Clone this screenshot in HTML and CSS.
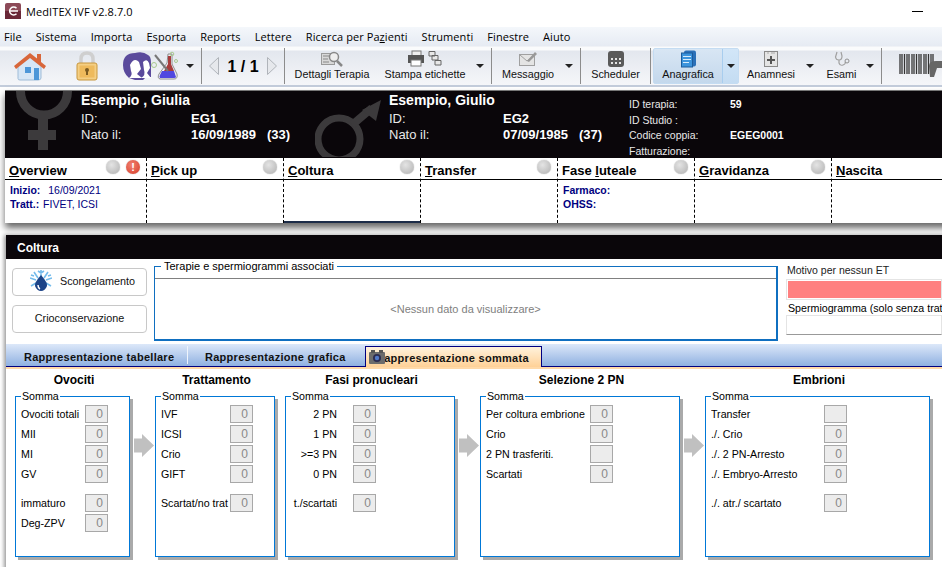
FILE: index.html
```html
<!DOCTYPE html>
<html lang="it">
<head>
  <meta charset="UTF-8" />
  <title>MedITEX IVF v2.8.7.0</title>
  <link rel="stylesheet" href="styles.css">
</head>
<body>

  <div class="titlebar">
    <svg class="app-icon" width="16" height="16" viewBox="0 0 16 16">
      <rect width="16" height="16" rx="2" fill="#8c4a58"/>
      <rect y="8" width="16" height="8" fill="#6a2838"/>
      <path d="M11.5 5.2A4 4 0 1 0 11.5 10.8M5.500 8H13" fill="none" stroke="#fff" stroke-width="1.500"/>
    </svg>
    <span class="app-title">MedITEX IVF v2.8.7.0</span>
    <span class="minimize"></span>
  </div>

  <div class="menubar">
    <span>File</span>
    <span>Sistema</span>
    <span>Importa</span>
    <span>Esporta</span>
    <span>Reports</span>
    <span>Lettere</span>
    <span>Ricerca per Pa<u>z</u>ienti</span>
    <span>Strumenti</span>
    <span>Finestre</span>
    <span>Aiuto</span>
  </div>

  <div class="toolbar">
    <div class="tool tool-home">
      <svg width="34" height="34" viewBox="0 0 34 34">
        <path d="M5 16V29.500Q5 31 7 31H25Q28 31 28 29V15L17 6Z" fill="#d6e6f6" stroke="#9fbcd8"/>
        <path d="M17 4L1 17L3 20L17 9L31 20L33 17L28 13V5H24V9.500Z" fill="#d8663a"/>
        <rect x="12" y="18" width="6" height="6" fill="#4c96d8"/>
        <rect x="21" y="19" width="5" height="12" fill="#4c96d8"/>
      </svg>
    </div>
    <div class="tool tool-lock">
      <svg width="22" height="30" viewBox="0 0 22 30">
        <path d="M5 13V8Q5 2 11 2T17 8V13" fill="none" stroke="#cfcfcf" stroke-width="3.500"/>
        <rect x="1" y="12" width="20" height="17" rx="2" fill="#f4cf84" stroke="#c8963c"/>
        <rect x="3.500" y="14.500" width="15" height="12" fill="#eeba5c"/>
        <circle cx="11" cy="19" r="2" fill="#7a5a20"/>
        <rect x="10" y="19" width="2" height="5" fill="#7a5a20"/>
      </svg>
    </div>
    <div class="tool tool-couple">
      <svg width="56" height="30" viewBox="0 0 56 30">
        <path d="M1 14Q1 2 13 2Q21 0 26 4Q29 5 29 12L29 26H24L21 29H13L7 27Q1 22 1 14Z" fill="#5a4a9c"/>
        <path d="M8 14Q12 6 17 11L19 18L15 23L20 27H7Q11 24 9 20Z" fill="#fff"/>
        <path d="M21 11Q25 7 27 12L28 17L25 22L29 27H19Q24 24 22 19Z" fill="#fff"/>
        <path d="M46 3H50L50 13L55 23Q56 28 52 28H38Q35 27 37 23L45 12Z" fill="#f0f0f4" stroke="#777" stroke-width="0.800"/>
        <path d="M40 20H52L54 26Q54 27 52 27H38Q37 26 38 24Z" fill="#5048e0"/>
        <path d="M46 5H49V13L52 20H42L46 13Z" fill="#a83c3c"/>
        <path d="M33 4L46 20" stroke="#777" stroke-width="2"/>
        <circle cx="32" cy="14" r="2.500" fill="none" stroke="#a8c890"/>
        <circle cx="50" cy="3" r="1.800" fill="none" stroke="#a8c890"/>
        <circle cx="54" cy="10" r="1.500" fill="none" stroke="#a8c890"/>
      </svg>
    </div>
    <span class="caret caret-couple"></span>
    <span class="tool-sep"></span>
    <div class="pager">
      <svg width="10" height="18" viewBox="0 0 10 18"><path d="M9.500 0.500V17.500L0.500 9Z" fill="#e6e8ec" stroke="#b0b4ba"/></svg>
      <span class="page-text">1 / 1</span>
      <svg width="10" height="18" viewBox="0 0 10 18"><path d="M0.500 0.500V17.500L9.500 9Z" fill="#e6e8ec" stroke="#b0b4ba"/></svg>
    </div>
    <span class="tool-sep"></span>
    <div class="tool tool-text tool-details">
      <svg width="22" height="18" viewBox="0 0 22 18">
        <rect x="0.500" y="3.500" width="13" height="11" fill="#d8d8d8" stroke="#9a9a9a"/>
        <path d="M2 6H9M2 9H7M2 12H8" stroke="#888"/>
        <circle cx="13" cy="7" r="4.500" fill="#eee" stroke="#888" stroke-width="1.500"/>
        <path d="M16 11L21 16" stroke="#888" stroke-width="2.500"/>
      </svg>
      <span>Dettagli Terapia</span>
    </div>
    <div class="tool tool-text tool-print">
      <svg width="34" height="18" viewBox="0 0 34 18">
        <rect x="4" y="1" width="9" height="5" fill="#eee" stroke="#777"/>
        <rect x="0" y="5" width="16" height="8" fill="#555"/>
        <rect x="3" y="10" width="10" height="6" fill="#fff" stroke="#777"/>
        <path d="M21 1.500H27V6H21ZM24 5.500H30V10H24ZM27 10.500H33V15H27Z" fill="#e8e8e8" stroke="#666"/>
      </svg>
      <span>Stampa etichette</span>
    </div>
    <span class="caret caret-print"></span>
    <span class="tool-sep"></span>
    <div class="tool tool-text tool-message">
      <svg width="18" height="16" viewBox="0 0 18 16">
        <rect x="0.500" y="3.500" width="15" height="11" fill="#e4e4e4" stroke="#a0a0a0"/>
        <path d="M1 4L8 10L15 4" fill="none" stroke="#a0a0a0"/>
        <path d="M8 10L16 1L18 3L10 11Z" fill="#999"/>
      </svg>
      <span>Messaggio</span>
    </div>
    <span class="caret caret-message"></span>
    <span class="tool-sep"></span>
    <div class="tool tool-text tool-scheduler">
      <svg width="16" height="16" viewBox="0 0 16 16">
        <rect width="16" height="16" rx="3" fill="#5a5a5a"/>
        <path d="M3 7H5V9H3ZM7 7H9V9H7ZM11 7H13V9H11ZM3 11H5V13H3ZM7 11H9V13H7ZM11 11H13V13H11Z" fill="#e4e4e4"/>
      </svg>
      <span>Scheduler</span>
    </div>
    <span class="tool-sep"></span>
    <div class="tool-split">
      <div class="tool tool-text tool-anagrafica">
        <svg width="15" height="17" viewBox="0 0 15 17">
          <rect x="3" y="0" width="12" height="16" rx="2" fill="#2a70b8"/>
          <rect x="0.500" y="2.500" width="11" height="14" fill="#3c94dc" stroke="#1c5c9c"/>
          <path d="M2 6H10M2 9H10M2 12H8" stroke="#d8ecfa"/>
        </svg>
        <span>Anagrafica</span>
      </div>
      <div class="split-drop"><span class="caret"></span></div>
    </div>
    <div class="tool tool-text tool-anamnesi">
      <svg width="14" height="16" viewBox="0 0 14 16">
        <rect x="0.500" y="0.500" width="13" height="15" fill="#e4e4e4" stroke="#8a8a8a"/>
        <path d="M3 2H5M7 2H11" stroke="#aaa"/>
        <path d="M6 5H8V8H11V10H8V13H6V10H3V8H6Z" fill="#555"/>
      </svg>
      <span>Anamnesi</span>
    </div>
    <span class="caret caret-anamnesi"></span>
    <div class="tool tool-text tool-esami">
      <svg width="16" height="16" viewBox="0 0 16 16">
        <path d="M3 1L1.500 6Q2 9 5 9T8 5L7 1M5 9V12Q6 15 9 14T11 11" fill="none" stroke="#a0a0a0" stroke-width="1.200"/>
        <circle cx="13" cy="10" r="2" fill="none" stroke="#909090"/>
      </svg>
      <span>Esami</span>
    </div>
    <span class="caret caret-esami"></span>
    <span class="tool-sep"></span>
    <svg class="barcode" width="44" height="24" viewBox="0 0 44 24">
      <path d="M1 1V21M3 1V21M5.500 1V21M8 1V21M10 1V21M13 1V21M15 1V21M17.500 1V21M20 1V21M22 1V21M25 1V21M27 1V21M29.500 1V21M32 1V21M34 1V21" stroke="#333" stroke-width="1.300"/>
      <path d="M30 13Q30 8 37 8H44V15H38L35 24H31Z" fill="#666"/>
    </svg>
  </div>

  <div class="patient-card">
    <div class="patient-head">
      <div class="person">
        <svg class="gender gender-f" width="56" height="60" viewBox="0 0 56 60">
          <circle cx="28" cy="0.500" r="23.500" fill="none" stroke="#3c3a3c" stroke-width="9"/>
          <path d="M27 24V59M12 44H40" stroke="#3c3a3c" stroke-width="10"/>
        </svg>
        <div class="person-name">Esempio , Giulia</div>
        <div class="person-row"><span class="person-label">ID:</span><b>EG1</b></div>
        <div class="person-row"><span class="person-label">Nato il:</span><b>16/09/1989&nbsp;&nbsp; (33)</b></div>
      </div>
      <div class="person person-male">
        <svg class="gender gender-m" width="68" height="58" viewBox="0 0 68 58">
          <circle cx="24" cy="40" r="21" fill="none" stroke="#3c3a3c" stroke-width="7"/>
          <path d="M37 26L57 9" stroke="#3c3a3c" stroke-width="8"/>
          <path d="M47 11L66 1L61 22Z" fill="#3c3a3c"/>
        </svg>
        <div class="person-name">Esempio, Giulio</div>
        <div class="person-row"><span class="person-label">ID:</span><b>EG2</b></div>
        <div class="person-row"><span class="person-label">Nato il:</span><b>07/09/1985&nbsp;&nbsp; (37)</b></div>
      </div>
      <div class="therapy">
        <div class="therapy-row"><span class="therapy-label">ID terapia:</span><b>59</b></div>
        <div class="therapy-row"><span class="therapy-label">ID Studio :</span></div>
        <div class="therapy-row"><span class="therapy-label">Codice coppia:</span><b>EGEG0001</b></div>
        <div class="therapy-row"><span class="therapy-label">Fatturazione:</span></div>
      </div>
    </div>
    <div class="stages">
      <div class="stage stage-first">
        <div class="stage-title"><span><u>O</u>verview</span><span class="leds"><i class="led"></i><i class="led led-warn">!</i></span></div>
        <div class="stage-body">
          <div class="stage-line"><b>Inizio:</b> <span class="date">16/09/2021</span></div>
          <div class="stage-line"><b>Tratt.:</b> FIVET, ICSI</div>
        </div>
      </div>
      <div class="stage">
        <div class="stage-title"><span><u>P</u>ick up</span><i class="led"></i></div>
        <div class="stage-body"></div>
      </div>
      <div class="stage stage-active">
        <div class="stage-title"><span><u>C</u>oltura</span><i class="led"></i></div>
        <div class="stage-body"></div>
      </div>
      <div class="stage">
        <div class="stage-title"><span><u>T</u>ransfer</span><i class="led"></i></div>
        <div class="stage-body"></div>
      </div>
      <div class="stage">
        <div class="stage-title"><span>Fase <u>l</u>uteale</span><i class="led"></i></div>
        <div class="stage-body">
          <div class="stage-line"><b>Farmaco:</b></div>
          <div class="stage-line"><b>OHSS:</b></div>
        </div>
      </div>
      <div class="stage">
        <div class="stage-title"><span><u>G</u>ravidanza</span><i class="led"></i></div>
        <div class="stage-body"></div>
      </div>
      <div class="stage">
        <div class="stage-title"><span><u>N</u>ascita</span><i class="led"></i></div>
        <div class="stage-body"></div>
      </div>
    </div>
  </div>

  <div class="section">
    <div class="section-head">Coltura</div>

    <div class="section-top">
      <div class="actions">
        <button class="action action-icon">
          <svg width="22" height="22" viewBox="0 0 22 22">
            <path d="M11 0V8M4 2L8 8M18 2L14 8M0 8L6 10M22 8L16 10M1 16L6 13M21 16L16 13M8 1L11 3L14 1M1 5L4 6M21 5L18 6" fill="none" stroke="#74bcec" stroke-width="1.600"/>
            <path d="M11 5Q18 13 17 16Q15 21 11 21T5 16Q4 13 11 5Z" fill="#1c4488"/>
            <path d="M8 15Q8 18 10 19" fill="none" stroke="#fff" stroke-width="1.500"/>
          </svg>
          <span>Scongelamento</span>
        </button>
        <button class="action">Crioconservazione</button>
      </div>

      <div class="linked">
        <span class="linked-title">Terapie e spermiogrammi associati</span>
        <div class="linked-grid">&lt;Nessun dato da visualizzare&gt;</div>
      </div>

      <div class="side-fields">
        <div class="side-label">Motivo per nessun ET</div>
        <div class="side-input side-input-alert"><span></span></div>
        <div class="side-label side-label-sperm">Spermiogramma (solo senza trat</div>
        <div class="side-input side-input-plain"></div>
      </div>
    </div>

    <div class="viewtabs">
      <span class="viewtab viewtab-table">Rappresentazione tabellare</span>
      <span class="viewtab viewtab-graph">Rappresentazione grafica</span>
      <span class="viewtab viewtab-active">
        <svg class="camera" width="16" height="14" viewBox="0 0 16 14">
          <rect y="2" width="16" height="12" rx="1" fill="#6c6c6c"/>
          <rect x="2" y="0" width="4" height="3" fill="#555"/>
          <rect x="10" y="0" width="4" height="3" fill="#555"/>
          <circle cx="8" cy="8" r="4" fill="#2c2c50"/>
          <circle cx="8" cy="8" r="2.200" fill="#5078c8"/>
        </svg>
        Rappresentazione sommata
      </span>
    </div>

    <div class="groups">
      <div class="group-col col-ovociti">
        <div class="group-title">Ovociti</div>
        <div class="group">
          <span class="group-legend">Somma</span>
          <div class="row"><span class="lbl">Ovociti totali</span><span class="val">0</span></div>
          <div class="row"><span class="lbl">MII</span><span class="val">0</span></div>
          <div class="row"><span class="lbl">MI</span><span class="val">0</span></div>
          <div class="row"><span class="lbl">GV</span><span class="val">0</span></div>
          <div class="row row-gap"><span class="lbl">immaturo</span><span class="val">0</span></div>
          <div class="row"><span class="lbl">Deg-ZPV</span><span class="val">0</span></div>
        </div>
      </div>
      <div class="flow-arrow"></div>
      <div class="group-col col-tratt">
        <div class="group-title">Trattamento</div>
        <div class="group">
          <span class="group-legend">Somma</span>
          <div class="row"><span class="lbl">IVF</span><span class="val">0</span></div>
          <div class="row"><span class="lbl">ICSI</span><span class="val">0</span></div>
          <div class="row"><span class="lbl">Crio</span><span class="val">0</span></div>
          <div class="row"><span class="lbl">GIFT</span><span class="val">0</span></div>
          <div class="row row-gap"><span class="lbl">Scartat/no trat</span><span class="val">0</span></div>
        </div>
      </div>
      <div class="group-col col-fasi">
        <div class="group-title">Fasi pronucleari</div>
        <div class="group">
          <span class="group-legend">Somma</span>
          <div class="row"><span class="lbl">2 PN</span><span class="val">0</span></div>
          <div class="row"><span class="lbl">1 PN</span><span class="val">0</span></div>
          <div class="row"><span class="lbl">&gt;=3 PN</span><span class="val">0</span></div>
          <div class="row"><span class="lbl">0 PN</span><span class="val">0</span></div>
          <div class="row row-gap"><span class="lbl">t./scartati</span><span class="val">0</span></div>
        </div>
      </div>
      <div class="flow-arrow"></div>
      <div class="group-col col-selez">
        <div class="group-title">Selezione 2 PN</div>
        <div class="group">
          <span class="group-legend">Somma</span>
          <div class="row"><span class="lbl">Per coltura embrione</span><span class="val">0</span></div>
          <div class="row"><span class="lbl">Crio</span><span class="val">0</span></div>
          <div class="row"><span class="lbl">2 PN trasferiti.</span><span class="val"></span></div>
          <div class="row"><span class="lbl">Scartati</span><span class="val">0</span></div>
        </div>
      </div>
      <div class="flow-arrow"></div>
      <div class="group-col col-embrioni">
        <div class="group-title">Embrioni</div>
        <div class="group">
          <span class="group-legend">Somma</span>
          <div class="row"><span class="lbl">Transfer</span><span class="val"></span></div>
          <div class="row"><span class="lbl">./. Crio</span><span class="val">0</span></div>
          <div class="row"><span class="lbl">./. 2 PN-Arresto</span><span class="val">0</span></div>
          <div class="row"><span class="lbl">./. Embryo-Arresto</span><span class="val">0</span></div>
          <div class="row row-gap"><span class="lbl">./. atr./ scartato</span><span class="val">0</span></div>
        </div>
      </div>
    </div>
  </div>

</body>
</html>
```

FILE: styles.css
```css
* {
  box-sizing: border-box;
}

html, body {
  height: 567px;
  overflow: hidden;
}

body {
  margin: 0;
  width: 942px;
  background: #fff;
  font-family: 'Liberation Sans', Arial, sans-serif;
  font-size: 11px;
  color: #000;
}

/* title bar */
.titlebar {
  height: 27px;
  display: flex;
  align-items: flex-start;
  padding: 3px 0 0 5px;
  background: #fff;
}

.app-title {
  margin-left: 5px;
  font-family: 'Open Sans', sans-serif;
  font-size: 11px;
  letter-spacing: 0.1px;
  line-height: 17px;
}

.minimize {
  width: 11px;
  height: 1px;
  margin: 8px 19px 0 auto;
  background: #000;
}

/* menu */
.menubar {
  height: 19px;
  display: flex;
  gap: 14px;
  padding-left: 4px;
  align-items: center;
  background: linear-gradient(#f4f7fb, #e6ebf3);
  font-family: 'Open Sans', sans-serif;
  font-size: 11px;
  letter-spacing: 0.075px;
}

/* toolbar */
.toolbar {
  height: 41px;
  display: flex;
  align-items: stretch;
  border-top: 1px solid #f0f2f6;
  border-bottom: 2px solid #c3ccdb;
  background: linear-gradient(#fafbfc 0, #fafbfc 3px, #e3e7ee 4px, #f5f6f9 100%);
  overflow: hidden;
}

.tool {
  display: flex;
  flex-direction: column;
  align-items: center;
  justify-content: center;
  flex: none;
}

.tool-text {
  justify-content: flex-start;
  padding-top: 3px;
  white-space: nowrap;
  font-size: 10.800px;
  line-height: 13px;
  color: #111;
}

.tool-text svg {
  height: 18px;
}

.tool-home { width: 60px; }
.tool-lock { width: 54px; }
.tool-couple { width: 66px; padding-left: 6px; }
.tool-details { width: 94px; }
.tool-print { width: 92px; }
.tool-message { width: 72px; }
.tool-scheduler { width: 69px; }
.tool-anagrafica { width: 68px; padding-top: 1px; }
.tool-anamnesi { width: 60px; margin-left: 2px; }
.tool-esami { width: 37px; }

.tool-sep {
  width: 1px;
  flex: none;
  margin: 1px 0;
  background: #8c8c8c;
}

.caret {
  width: 0;
  height: 0;
  flex: none;
  align-self: center;
  border-left: 4px solid transparent;
  border-right: 4px solid transparent;
  border-top: 4px solid #222;
}

.caret-couple { margin: 0 7px 0 6px; }
.caret-print { margin: 0 7px 0 5px; }
.caret-message { margin: 0 7px 0 1px; }
.caret-anamnesi { margin: 0 9px 0 5px; }
.caret-esami { margin: 0 7px 0 6px; }

.pager {
  width: 82px;
  flex: none;
  display: flex;
  align-items: center;
  justify-content: center;
  gap: 8px;
}

.page-text {
  padding-top: 1px;
  font-size: 16px;
  font-weight: bold;
  white-space: nowrap;
}

.tool-split {
  display: flex;
  flex: none;
  margin: 1px 0 1px 2px;
  border: 1px solid #c4dcf2;
  border-radius: 2px;
  background: linear-gradient(#d8e6f4, #c4d8ec);
}

.split-drop {
  width: 16px;
  display: flex;
  justify-content: center;
  border-left: 1px solid #a8cdee;
  background: linear-gradient(#d2e6f8, #c4dcf2);
}

.barcode {
  margin: 6px 0 0 17px;
  flex: none;
}

/* patient card */
.patient-card {
  position: relative;
  margin: 3px 0 0 5px;
  width: 1000px;
  background: #fff;
  border-top: 1px solid #777;
  box-shadow: 0 5px 7px rgba(0, 0, 0, 0.6);
}

.patient-head {
  height: 67px;
  display: flex;
  background: #0a060a;
  color: #fff;
  overflow: hidden;
}

.person {
  position: relative;
  width: 308px;
  flex: none;
  padding: 1px 0 0 76px;
}

.person-name {
  position: relative;
  margin-bottom: 2px;
  font-size: 14px;
  font-weight: bold;
  line-height: 17px;
}

.person-row {
  position: relative;
  display: flex;
  font-size: 13px;
  line-height: 16px;
  color: #e8e8e8;
}

.person-row b {
  color: #fff;
  white-space: nowrap;
}

.person-label {
  width: 110px;
  flex: none;
}

.person-male .person-label {
  width: 114px;
}

.gender {
  position: absolute;
}

.gender-f {
  left: 11px;
  top: 0;
}

.gender-m {
  left: 2px;
  top: 8px;
}

.therapy {
  margin-left: 8px;
  padding-top: 6px;
  position: relative;
}

.therapy-row {
  display: flex;
  height: 15.500px;
  line-height: 15px;
  font-size: 10.500px;
  color: #e8e8e8;
}

.therapy-row b {
  color: #fff;
}

.therapy-label {
  width: 101px;
  flex: none;
}

.stages {
  display: grid;
  grid-template-columns: 142px repeat(6, 137px);
  height: 65px;
}

.stage {
  border-right: 1px dashed #000;
  min-width: 0;
}

.stage-title {
  height: 22px;
  display: flex;
  justify-content: space-between;
  padding: 3px 6px 0 4px;
  border-bottom: 1.500px solid #000;
  font-size: 13px;
  font-weight: bold;
  line-height: 19px;
}

.stage-body {
  height: 43px;
  padding: 3px 0 0 5px;
}

.stage-active .stage-body {
  border-bottom: 2px solid #1c2c48;
}

.stage-line {
  height: 14px;
  line-height: 14px;
  font-size: 10.500px;
  color: #000080;
  white-space: nowrap;
}

.stage-line b {
  margin-right: 1px;
}

.date {
  margin-left: 4px;
}

.leds {
  display: flex;
  gap: 6px;
}

.led {
  display: block;
  width: 14px;
  height: 14px;
  margin-top: -1px;
  border-radius: 50%;
  background: radial-gradient(circle at 40% 35%, #e4e4e4, #b0b0b0);
  box-shadow: 0 0 1px #999;
}

.led-warn {
  background: radial-gradient(circle at 40% 35%, #f08070, #d83c28);
  color: #fff;
  font-style: normal;
  font-size: 11px;
  line-height: 14px;
  text-align: center;
}

/* coltura section */
.section {
  margin: 12px 0 0 6px;
  width: 1000px;
  height: 340px;
  background: #fff;
  box-shadow: -2px 0 4px rgba(0, 0, 0, 0.4);
}

.section-head {
  height: 24px;
  padding-left: 11px;
  background: #0a060a;
  color: #fff;
  font-size: 12px;
  font-weight: bold;
  line-height: 26px;
}

.section-top {
  height: 85px;
  display: flex;
}

.actions {
  width: 135px;
  margin: 9px 0 0 6px;
  display: flex;
  flex-direction: column;
  gap: 9px;
  flex: none;
}

.action {
  height: 28px;
  padding: 0 0 2px;
  display: flex;
  align-items: center;
  justify-content: center;
  border: 1px solid #c8c8c8;
  border-radius: 4px;
  background: #fff;
  font-family: inherit;
  font-size: 10.800px;
  color: #111;
}

.action-icon {
  justify-content: flex-start;
  padding-left: 17px;
  gap: 8px;
}

.linked {
  position: relative;
  width: 624px;
  height: 75px;
  margin: 7px 0 0 7px;
  flex: none;
  padding-top: 11px;
  border: 1px solid #0f6fc0;
  border-bottom-width: 2px;
  border-right-width: 2px;
}

.linked-title {
  position: absolute;
  top: -7px;
  left: 6px;
  padding: 0 3px;
  background: #fff;
  font-size: 11px;
  line-height: 13px;
  white-space: nowrap;
}

.linked-grid {
  height: 100%;
  display: flex;
  align-items: center;
  justify-content: center;
  border-top: 1px solid #808080;
  color: #808080;
  font-size: 11px;
}

.side-fields {
  width: 156px;
  margin: 5px 0 0 8px;
  flex: none;
  overflow: hidden;
}

.side-label {
  height: 13px;
  line-height: 13px;
  padding-left: 1px;
  font-size: 10.500px;
  color: #222;
  white-space: nowrap;
}

.side-label-sperm {
  margin-top: 2px;
  padding-left: 2px;
  font-size: 10.670px;
  color: #000;
}

.side-input {
  height: 21px;
  margin-top: 2px;
  border: 1px solid #e4e4e4;
}

.side-input-alert {
  padding: 1px 0 1px 1px;
}

.side-input-alert span {
  display: block;
  height: 100%;
  background: #ff8080;
}

.side-input-plain {
  height: 20px;
  margin-top: 0;
  border-bottom: 1px solid #999;
}

.viewtabs {
  height: 25px;
  display: flex;
  align-items: flex-end;
  border-bottom: 2px solid #ffd9a8;
  background: linear-gradient(#dce8f9, #8fb1e1 22px, #000080 22px);
  font-size: 11px;
  font-weight: bold;
  letter-spacing: 0.280px;
  color: #111;
}

.viewtab {
  height: 21px;
  line-height: 22px;
  white-space: nowrap;
  flex: none;
}

.viewtab-table {
  width: 182px;
  height: 18px;
  margin-bottom: 3px;
  padding-left: 18px;
  border-right: 1px solid #eef4fc;
}

.viewtab-graph {
  width: 177px;
  padding-left: 17px;
}

.viewtab-active {
  position: relative;
  width: 177px;
  padding-left: 10px;
  border: 1px solid #000080;
  border-bottom: 0;
  background: linear-gradient(#fff2dc, #ffd197);
}

.camera {
  position: absolute;
  left: 3px;
  top: 3px;
}

/* sum boxes */
.groups {
  display: flex;
  padding-left: 9px;
}

.group-col {
  flex: none;
}

.col-ovociti { width: 115px; }
.col-tratt { width: 120px; margin-right: 10px; }
.col-fasi { width: 170px; }
.col-selez { width: 200px; }
.col-embrioni { width: 225px; }

.group-title {
  height: 27px;
  padding: 3px 0 0 3px;
  text-align: center;
  font-size: 12px;
  font-weight: bold;
  line-height: 16px;
  white-space: nowrap;
}

.group {
  position: relative;
  height: 161px;
  padding: 8px 0 0 5px;
  border: 1px solid #0078d7;
  box-shadow: 3px 3px 0 #aaa;
  background: #fff;
}

.group-legend {
  position: absolute;
  top: -7px;
  left: 5px;
  padding: 0 1px;
  background: #fff;
  font-size: 10.670px;
  line-height: 13px;
}

.row {
  display: flex;
  height: 18px;
  margin-bottom: 2px;
}

.row-gap {
  margin-top: 11px;
}

.lbl {
  flex: none;
  display: flex;
  align-items: center;
  overflow: hidden;
  white-space: nowrap;
  font-size: 10.670px;
}

.val {
  width: 23px;
  flex: none;
  padding-right: 4px;
  border: 1px solid #a8a8a8;
  background: #ececec;
  color: #888;
  font-size: 12px;
  line-height: 17px;
  text-align: right;
}

.col-ovociti .lbl { width: 64px; }
.col-tratt .lbl { width: 69px; }
.col-selez .lbl { width: 104px; }
.col-embrioni .lbl { width: 113px; }

.col-fasi .lbl {
  width: 46px;
  margin-right: 16px;
  justify-content: flex-end;
}

.flow-arrow {
  width: 20px;
  height: 23px;
  margin: 65px 1px 0 4px;
  flex: none;
  align-self: flex-start;
  background: #c0c0c0;
  clip-path: polygon(0 20%, 40% 20%, 40% 0, 100% 50%, 40% 100%, 40% 80%, 0 80%);
}
```
